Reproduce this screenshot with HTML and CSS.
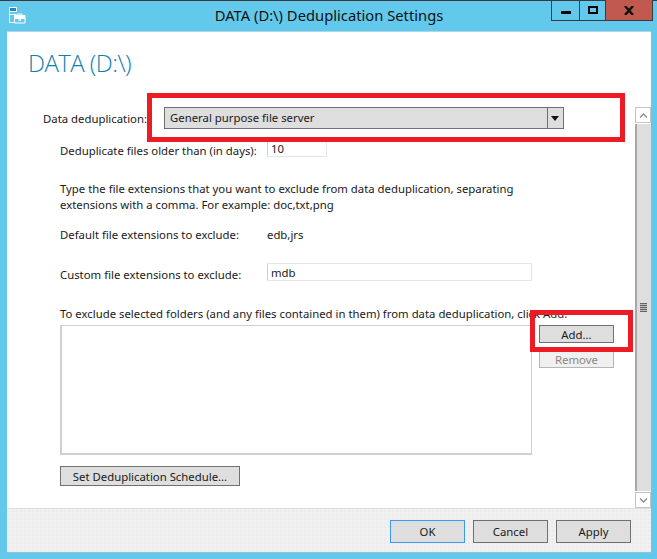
FILE: index.html
```html
<!DOCTYPE html>
<html lang="en">
<head>
<meta charset="utf-8">
<title>DATA (D:\) Deduplication Settings</title>
<link rel="stylesheet" href="styles.css">
</head>
<body>
<div class="window">
  <header class="titlebar">
    <svg class="app-icon" width="17" height="17" viewBox="0 0 17 17" fill="none" stroke="#fff">
      <path d="M.5 .5h7v4h-7zM.5 4.500v11h4.500M.5 7.500h7" />
      <path d="M1 1h6v3H1z" fill="#1c8ac4" stroke="none"/>
      <path d="M5.500 8.500h10.500v7.500h-10.500z" fill="#63c9ec"/>
      <path d="M5.500 9h10.500v3h-10.500z" fill="#fff" stroke="none"/>
      <path d="M8.500 8.500v-1.500h4.500v1.500M10 11.500v2h1.500v-2" />
    </svg>
    <div class="title">DATA (D:\) Deduplication Settings</div>
    <div class="controls">
      <div class="ctl ctl-min"><span class="min-glyph"></span></div>
      <div class="ctl ctl-max"><span class="max-glyph"></span></div>
      <div class="ctl ctl-close">
        <svg width="10" height="9" viewBox="0 0 10 9" stroke="#111" stroke-width="2.400" fill="none"><path d="M1 0l8 9M9 0l-8 9"/></svg>
      </div>
    </div>
  </header>
  <div class="panel">
    <div class="upper">
      <main class="content">
        <h1 class="heading">DATA (D:\)</h1>
        <div class="row-dedup">
          <span class="lbl-dedup">Data deduplication:</span>
          <div class="combo"><span class="combo-text">General purpose file server</span><span class="combo-arrow"></span></div>
        </div>
        <div class="indent">
          <div class="row-days"><span class="lbl-days">Deduplicate files older than (in days):</span><span class="field field-days">10</span></div>
          <p class="para">Type the file extensions that you want to exclude from data deduplication, separating<br>extensions with a comma. For example: doc,txt,png</p>
          <div class="row-default"><span class="lbl-ext">Default file extensions to exclude:</span><span class="val-ext">edb,jrs</span></div>
          <div class="row-custom"><span class="lbl-custom">Custom file extensions to exclude:</span><span class="field field-custom">mdb</span></div>
          <p class="folders-note">To exclude selected folders (and any files contained in them) from data deduplication, click Add.</p>
          <div class="folders">
            <div class="listbox"></div>
            <div class="side-buttons">
              <div class="btn btn-side">Add...</div>
              <div class="btn btn-side btn-disabled">Remove</div>
            </div>
          </div>
          <div class="btn btn-schedule">Set Deduplication Schedule...</div>
        </div>
      </main>
      <aside class="scrollbar">
        <div class="sb-btn"><svg width="9" height="5" viewBox="0 0 9 5" fill="none" stroke="#8a8a8a" stroke-width="1.300"><path d="M1 4.500l3.500-3.500 3.500 3.500"/></svg></div>
        <div class="sb-thumb"><span class="grip"></span></div>
        <div class="sb-btn"><svg width="9" height="5" viewBox="0 0 9 5" fill="none" stroke="#8a8a8a" stroke-width="1.300"><path d="M1 .5l3.500 3.500 3.500-3.500"/></svg></div>
      </aside>
    </div>
    <footer class="footer">
      <div class="btn btn-foot btn-default">OK</div>
      <div class="btn btn-foot">Cancel</div>
      <div class="btn btn-foot">Apply</div>
    </footer>
  </div>
  <div class="mark mark-combo"></div>
  <div class="mark mark-add"></div>
</div>
</body>
</html>
```
FILE: styles.css
```css
* { box-sizing: border-box; }
html, body { margin: 0; padding: 0; }
body { width: 657px; height: 559px; overflow: hidden; background: #63c9ec; font-family: "Noto Sans", "Open Sans", sans-serif; font-size: 11.35px; color: #1a1a1a; }
.window { position: relative; width: 657px; height: 559px; border-top: 1px solid #3a3a3a; }
.titlebar { display: grid; grid-template-columns: 1fr auto 1fr; height: 30px; }
.app-icon { margin: 6px 0 0 9px; }
.title { font-size: 14.75px; color: #111; line-height: 29px; padding-left: 1px; }
.controls { justify-self: end; display: flex; height: 21px; margin-right: 4px; margin-top: -1px; border: 1px solid #3a3a3a; border-top: 0; }
.ctl { display: flex; align-items: center; justify-content: center; }
.ctl-min { width: 28px; border-right: 1px solid #3a3a3a; }
.ctl-max { width: 26px; border-right: 1px solid #3a3a3a; }
.ctl-close { width: 46px; background: #c1594f; }
.min-glyph { width: 10px; height: 3px; background: #000; margin-top: 5px; }
.max-glyph { width: 10px; height: 8px; border: 2px solid #000; margin-bottom: 1px; }
.panel { margin: 0 6px 0 7px; height: 521px; background: #fff; display: flex; flex-direction: column; border-top: 1px solid #a9d8e8; box-shadow: 0 1px 0 #8fc4d8; }
.upper { flex: 1; display: flex; min-height: 0; }
.content { flex: 1; padding: 0 0 0 36px; }
.heading { margin: 13px 0 0 -15px; font-size: 24px; font-weight: 300; letter-spacing: -0.55px; font-family: "Open Sans", sans-serif; line-height: 36px; color: #0f7fb0; }
.row-dedup { display: flex; align-items: center; margin: 26px 0 0 0; height: 22px; }
.lbl-dedup { width: 121px; white-space: nowrap; }
.combo { width: 400px; height: 22px; display: flex; justify-content: space-between; border: 1px solid #707070; background: #dedede; }
.combo-text { padding-left: 5px; line-height: 20px; }
.combo-arrow { width: 16px; border-left: 1px solid #707070; position: relative; }
.combo-arrow::after { content: ""; position: absolute; left: 3px; top: 8px; border: 4px solid transparent; border-top: 5px solid #111; border-bottom: 0; }
.indent { margin-left: 17px; }
.row-days { display: flex; height: 16px; margin-top: 12px; }
.lbl-days { width: 207px; white-space: nowrap; line-height: 16px; margin-top: 2px; }
.field { display: block; border: 1px solid #e6e6e6; border-left-color: #d0d0d0; padding-left: 3px; }
.field-days { width: 60px; height: 16px; line-height: 14px; }
.para { margin: 24px 0 0; line-height: 16px; }
.row-default { display: flex; height: 17px; margin-top: 13px; line-height: 17px; }
.lbl-ext { width: 207px; }
.row-custom { display: flex; height: 18px; margin-top: 20px; }
.lbl-custom { width: 207px; line-height: 18px; margin-top: 3px; }
.field-custom { width: 265px; height: 18px; line-height: 17px; }
.folders-note { margin: 24px 0 0; line-height: 17px; height: 17px; white-space: nowrap; }
.folders { display: flex; margin-top: 3px; }
.listbox { width: 472px; height: 130px; border: 2px solid #d0d0d0; border-width: 1px 1px 2px 2px; }
.side-buttons { margin-left: 7px; display: flex; flex-direction: column; gap: 7px; }
.btn { display: flex; align-items: center; justify-content: center; border: 1px solid #707070; background: #dedede; }
.btn-side { width: 75px; height: 18px; }
.btn-disabled { border-color: #b5b5b5; background: #f0f0f0; color: #888; }
.btn-schedule { width: 180px; height: 20px; margin-top: 11px; }
.scrollbar { width: 16px; display: flex; flex-direction: column; margin-top: 75px; background: #fff; height: 401px; }
.sb-btn { height: 16px; flex: none; border: 1px solid #c4c4c4; display: flex; align-items: center; justify-content: center; }
.sb-thumb { flex: 1; margin: 1px 0; background: #dedede; border-left: 2px solid #a8a8a8; display: flex; align-items: center; justify-content: center; }
.grip { width: 7px; height: 9px; background: repeating-linear-gradient(#666 0 1px, #bbb 1px 2px); margin-left: -1px; }
.footer { flex: none; height: 44px; display: flex; justify-content: flex-end; gap: 8px; padding: 11px 20px 0 0; background-color: #f0f0f0; background-image: radial-gradient(#e6e6e6 0.6px, transparent 0.8px); background-size: 4px 4px; border-top: 1px solid #dedede; }
.btn-foot { width: 75px; height: 23px; }
.btn-default { border-color: #3c9bf0; }
.mark { position: absolute; border: 5px solid #ed1c24; }
.mark-combo { left: 147px; top: 92px; width: 478px; height: 49px; }
.mark-add { left: 530px; top: 309px; width: 103px; height: 42px; }
```
